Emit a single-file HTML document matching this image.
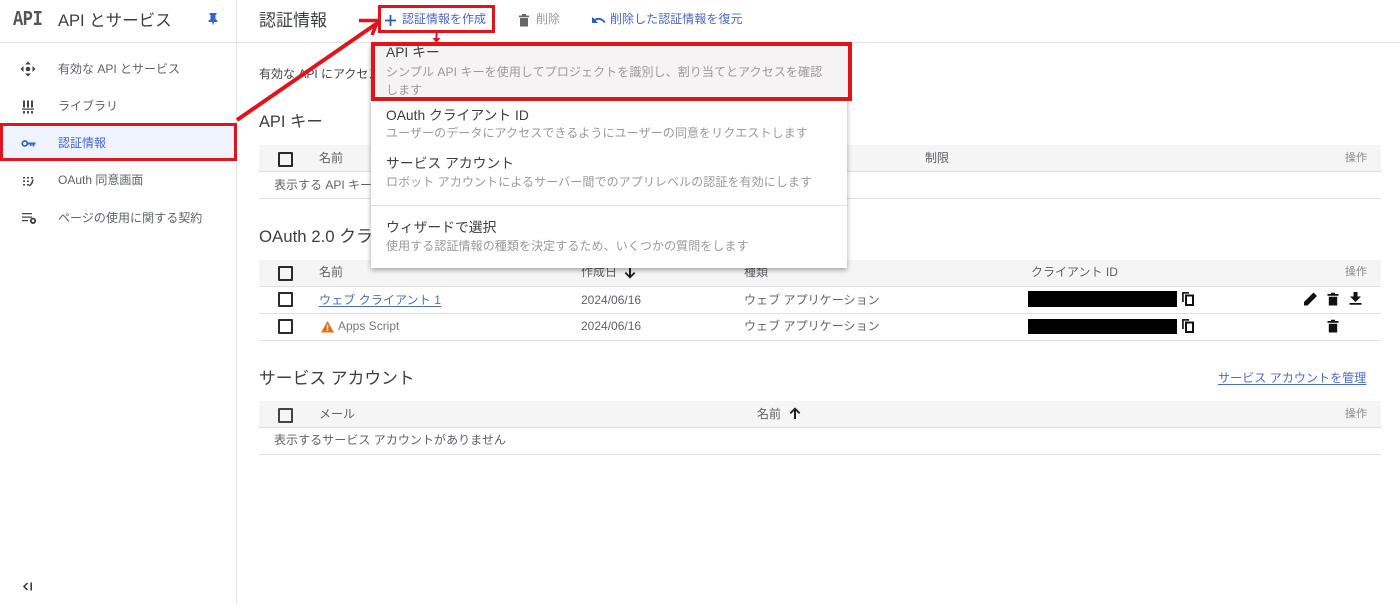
<!DOCTYPE html>
<html lang="ja"><head><meta charset="utf-8"><style>
html,body{margin:0;padding:0;background:#fff}
body{width:1400px;height:604px;position:relative;overflow:hidden;font-family:"Liberation Sans","Noto Sans CJK JP",sans-serif;color:#5f6368;font-size:12px}
.t{position:absolute;white-space:nowrap;line-height:18px}
.b{position:absolute}
.hd{background:#f5f5f5}
.ln{position:absolute;height:1px;background:#e0e0e0}
.cb{position:absolute;width:11px;height:11px;border:2px solid #2a2a2a;border-radius:1px;left:278px}
.bl{color:#4a68c4}
.d{color:#3c4043}
.m{color:#9a9a9a;letter-spacing:.09px}
.h{font-size:16.8px;line-height:22px}
.mt{font-size:13.8px}
.op{color:#8a8a8a;font-size:11px;left:1345px}
svg{position:absolute}
</style></head><body>
<!-- sidebar -->
<div class="b" style="left:236px;top:0;width:1px;height:604px;background:#e3e3e3"></div>
<div class="b" style="left:0;top:42px;width:1400px;height:1px;background:#e3e3e3"></div>
<div class="t" style="left:13px;top:11px;font:bold 17px/20px 'Liberation Mono',monospace;color:#555;letter-spacing:-.4px;transform:scaleY(1.25)">API</div>
<div class="t d" style="left:58px;top:10px;font-size:16.5px;line-height:22px">API とサービス</div>
<svg style="left:206px;top:12px" width="14" height="14" viewBox="0 0 14 14"><path d="M3.500 1h7v1.500l-1 .5v4l2 1.800v1.200h-3.500l-1 3.500-1-3.500h-3.500v-1.200l2-1.800v-4l-1-.5z" fill="#2f67d2"/></svg>
<svg style="left:20px;top:61px" width="16" height="16" viewBox="0 0 16 16" fill="#444"><path d="M8 .5l3 3h-6zM8 15.500l3-3h-6zM.5 8l3-3v6zM15.500 8l-3-3v6z"/><circle cx="8" cy="8" r="2.300"/></svg>
<div class="t" style="left:58px;top:60px">有効な API とサービス</div>
<svg style="left:22px;top:100px" width="12" height="14" viewBox="0 0 12 14" fill="#444"><path d="M1 .5h2v7h-2zM5 .5h2v7h-2zM9 .5h2v7h-2zM0 8.500h12v1.300h-12zM1 11h2v2.500h-2zM5 11h2v2.500h-2zM9 11h2v2.500h-2z"/></svg>
<div class="t" style="left:58px;top:97px">ライブラリ</div>
<div class="b" style="left:2px;top:127px;width:232px;height:30px;background:#eef3fd"></div>
<svg style="left:21px;top:139px" width="15" height="9" viewBox="0 0 15 9" fill="none"><circle cx="3.800" cy="4.500" r="2.500" stroke="#2f67d2" stroke-width="1.800"/><path d="M6.500 3.500h8v2h-1.200v2h-1.800v-2h-1v1.500h-1.500v-1.500h-2.500z" fill="#2f67d2"/></svg>
<div class="t bl" style="left:58px;top:134px">認証情報</div>
<svg style="left:23px;top:176px" width="12" height="11" viewBox="0 0 12 11" fill="#444"><path d="M0 1h2v1.500h-2zM4 1h2v1.500h-2zM8 1h2v1.500h-2zM0 4.500h2v1.500h-2zM4 4.500h2v1.500h-2zM0 8h2v1.500h-2zM4 8h2v1.500h-2zM9 3.500h1.500c0 3-1.500 6-4.500 7v-1.500c1.700-.9 2.800-3 3-5.500z"/></svg>
<div class="t" style="left:58px;top:171px">OAuth 同意画面</div>
<svg style="left:21px;top:212px" width="16" height="13" viewBox="0 0 16 13" fill="#444"><path d="M1 1h10v1.300h-10zM1 4.500h10v1.300h-10zM1 8h6v1.300h-6z"/><circle cx="12" cy="8.800" r="2.200" fill="none" stroke="#444" stroke-width="1.900"/></svg>
<div class="t" style="left:58px;top:209px;letter-spacing:.05px">ページの使用に関する契約</div>
<svg style="left:22px;top:581px" width="11" height="11" viewBox="0 0 11 11" fill="none" stroke="#333" stroke-width="1.500"><path d="M5.500 2l-3.500 3.500 3.500 3.500M9.200 1.500v8"/></svg>
<!-- toolbar -->
<div class="t d" style="left:259px;top:10px;font-size:17px;line-height:22px">認証情報</div>
<svg style="left:384px;top:14px" width="13" height="13" viewBox="0 0 13 13" fill="#2f5dbd"><path d="M5.600 1h1.800v4.600h4.600v1.800h-4.600v4.600h-1.800v-4.600h-4.600v-1.800h4.600z"/></svg>
<div class="t bl" style="left:402px;top:10px">認証情報を作成</div>
<svg style="left:517px;top:13px" width="14" height="14" viewBox="0 0 14 14" fill="#666"><path d="M2 2.500h10v1.700h-10zM5 1h4v1.500h-4zM3 5h8v8.500h-8z"/></svg>
<div class="t" style="left:536px;top:10px;color:#9a9a9a">削除</div>
<svg style="left:591px;top:14px" width="16" height="11" viewBox="0 0 16 11" fill="#2f5dbd"><path d="M1 3v6h6L4.600 6.600C7 5 10.500 5.500 13 9l1.500-.7C12 3.800 7.500 2.800 3.500 5z"/></svg>
<div class="t bl" style="left:610px;top:10px;letter-spacing:.05px">削除した認証情報を復元</div>
<!-- intro -->
<div class="t" style="left:259px;top:65px;color:#444">有効な API にアクセスするには認証情報を作成してください</div>
<!-- API keys -->
<div class="t d h" style="left:259px;top:111px;font-size:16.4px">API キー</div>
<div class="b hd" style="left:259px;top:145px;width:1122px;height:26px"></div>
<div class="ln" style="left:259px;top:171px;width:1122px"></div>
<div class="ln" style="left:259px;top:198px;width:1122px"></div>
<div class="cb" style="top:152px"></div>
<div class="t" style="left:319px;top:149px">名前</div>
<div class="t" style="left:925px;top:149px">制限</div>
<div class="t op" style="top:149px">操作</div>
<div class="t" style="left:274px;top:176px">表示する API キーがありません</div>
<!-- OAuth -->
<div class="t d h" style="left:259px;top:226px">OAuth 2.0 クライアント ID</div>
<div class="b hd" style="left:259px;top:260px;width:1122px;height:26px"></div>
<div class="ln" style="left:259px;top:286px;width:1122px"></div>
<div class="ln" style="left:259px;top:313px;width:1122px"></div>
<div class="ln" style="left:259px;top:340px;width:1122px"></div>
<div class="cb" style="top:266px"></div>
<div class="cb" style="top:292px"></div>
<div class="cb" style="top:319px"></div>
<div class="t" style="left:319px;top:263px">名前</div>
<div class="t" style="left:581px;top:263px">作成日</div>
<svg style="left:623px;top:266px" width="14" height="14" viewBox="0 0 14 14" fill="#222"><path d="M6 1h2v8l3-3 1.300 1.300-5.300 5.300-5.300-5.300 1.300-1.300 3 3z"/></svg>
<div class="t" style="left:744px;top:263px">種類</div>
<div class="t" style="left:1031px;top:263px">クライアント ID</div>
<div class="t op" style="top:263px">操作</div>
<div class="t" style="left:319px;top:291px;color:#4a6cc4;text-decoration:underline;text-underline-offset:2px;letter-spacing:.1px">ウェブ クライアント 1</div>
<div class="t" style="left:581px;top:291px">2024/06/16</div>
<div class="t" style="left:744px;top:291px;letter-spacing:.05px">ウェブ アプリケーション</div>
<div class="b" style="left:1028px;top:291px;width:149px;height:16px;background:#000"></div>
<svg style="left:1181px;top:291px" width="14" height="15" viewBox="0 0 14 15"><path d="M1 1h7v1.800h-5.200v8.200h-1.800z" fill="#222"/><rect x="5" y="4.500" width="7" height="9.500" fill="none" stroke="#111" stroke-width="2"/></svg>
<svg style="left:1303px;top:291px" width="15" height="15" viewBox="0 0 15 15" fill="#111"><path d="M1 14.500v-3.500L10.500 1.500l3.500 3.500L4.500 14.500z"/></svg>
<svg style="left:1326px;top:292px" width="14" height="14" viewBox="0 0 14 14" fill="#111"><path d="M1.500 2h11v1.700h-11zM5 .7h4v1.500h-4zM2.800 4.700h8.400v8.800h-8.400z"/></svg>
<svg style="left:1348px;top:291px" width="15" height="14" viewBox="0 0 15 14" fill="#111"><path d="M5.500 1h4v4.500h3.500l-5.500 5.500-5.500-5.500h3.500zM1.500 12h12v1.800h-12z"/></svg>
<svg style="left:321px;top:320px" width="13" height="13" viewBox="0 0 13 13"><path d="M6.500 1l6.500 11.500h-13z" fill="#e0701a"/><path d="M5.800 4.800h1.400v4h-1.400zM5.800 9.600h1.400v1.400h-1.400z" fill="#fff"/></svg>
<div class="t" style="left:338px;top:317px;color:#777">Apps Script</div>
<div class="t" style="left:581px;top:317px">2024/06/16</div>
<div class="t" style="left:744px;top:317px;letter-spacing:.05px">ウェブ アプリケーション</div>
<div class="b" style="left:1028px;top:319px;width:149px;height:15px;background:#000"></div>
<svg style="left:1181px;top:318px" width="14" height="15" viewBox="0 0 14 15"><path d="M1 1h7v1.800h-5.200v8.200h-1.800z" fill="#222"/><rect x="5" y="4.500" width="7" height="9.500" fill="none" stroke="#111" stroke-width="2"/></svg>
<svg style="left:1326px;top:319px" width="14" height="14" viewBox="0 0 14 14" fill="#111"><path d="M1.500 2h11v1.700h-11zM5 .7h4v1.500h-4zM2.800 4.700h8.400v8.800h-8.400z"/></svg>
<!-- service accounts -->
<div class="t d h" style="left:259px;top:368px">サービス アカウント</div>
<div class="t" style="left:1218px;top:369px;color:#4a6cc4;text-decoration:underline;text-underline-offset:2px;letter-spacing:.08px">サービス アカウントを管理</div>
<div class="b hd" style="left:259px;top:401px;width:1122px;height:26px"></div>
<div class="ln" style="left:259px;top:427px;width:1122px"></div>
<div class="ln" style="left:259px;top:454px;width:1122px"></div>
<div class="cb" style="top:408px;border-color:#444"></div>
<div class="t" style="left:319px;top:405px">メール</div>
<div class="t" style="left:757px;top:405px">名前</div>
<svg style="left:788px;top:406px" width="14" height="14" viewBox="0 0 14 14" fill="#222"><path d="M6 13h2v-8l3 3 1.300-1.300-5.300-5.300-5.300 5.300 1.300 1.300 3-3z"/></svg>
<div class="t op" style="top:405px">操作</div>
<div class="t" style="left:274px;top:431px;letter-spacing:.05px">表示するサービス アカウントがありません</div>
<!-- menu -->
<div class="b" style="left:371px;top:43px;width:476px;height:225px;background:#fff;box-shadow:0 2px 5px rgba(0,0,0,.35)"></div>
<div class="b" style="left:372px;top:43px;width:477px;height:57px;background:#f5f3f3"></div>
<div class="t d mt" style="left:386px;top:44px">API キー</div>
<div class="t m" style="left:386px;top:63px">シンプル API キーを使用してプロジェクトを識別し、割り当てとアクセスを確認</div>
<div class="t m" style="left:386px;top:81px">します</div>
<div class="t d mt" style="left:386px;top:107px">OAuth クライアント ID</div>
<div class="t m" style="left:386px;top:124px">ユーザーのデータにアクセスできるようにユーザーの同意をリクエストします</div>
<div class="t d mt" style="left:386px;top:155px">サービス アカウント</div>
<div class="t m" style="left:386px;top:173px">ロボット アカウントによるサーバー間でのアプリレベルの認証を有効にします</div>
<div class="ln" style="left:371px;top:205px;width:476px"></div>
<div class="t d mt" style="left:386px;top:219px">ウィザードで選択</div>
<div class="t m" style="left:386px;top:237px">使用する認証情報の種類を決定するため、いくつかの質問をします</div>
<!-- annotations -->
<div class="b" style="left:0;top:123px;width:237px;height:38px;box-sizing:border-box;border:3.500px solid #e0141c"></div>
<div class="b" style="left:378px;top:5px;width:117px;height:28px;box-sizing:border-box;border:3.500px solid #e0141c"></div>
<div class="b" style="left:371px;top:42px;width:481px;height:59px;box-sizing:border-box;border:4px solid #e0141c"></div>
<svg style="left:0;top:0" width="1400" height="604" viewBox="0 0 1400 604" fill="none" stroke="#e0141c"><path d="M237 120L376 24" stroke-width="4"/><path d="M359 20.500L378 20.500L372 35" stroke-width="3.500"/><path d="M436.500 33V40" stroke-width="2"/><path d="M432.500 38h8l-4 5z" fill="#e0141c" stroke="none"/></svg>
</body></html>
